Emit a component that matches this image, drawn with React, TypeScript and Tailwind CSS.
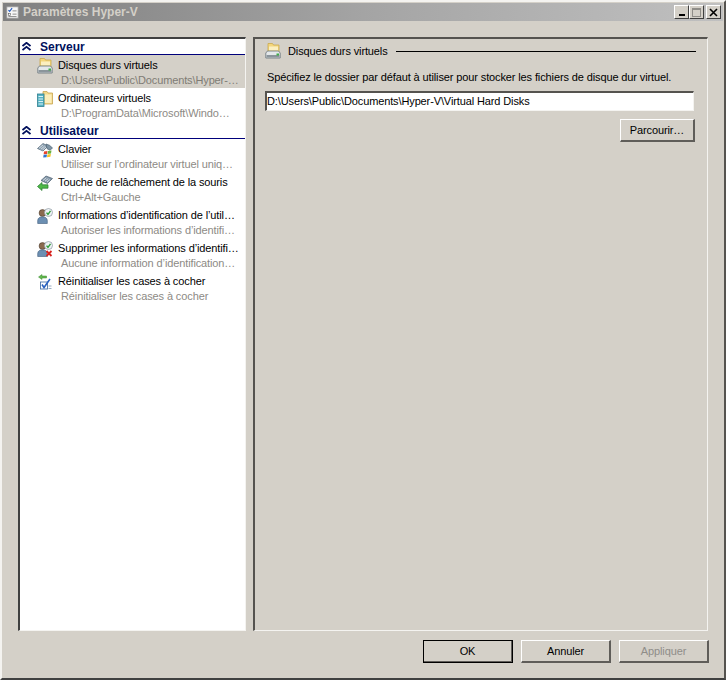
import React from 'react';

const font = 'font-["Liberation_Sans",Tahoma,sans-serif]';

function FolderDrive() {
  return (
    <svg viewBox="0 0 16 16" className="w-4 h-4">
      <path d="M3 .5h4.500l1 1.500h5.500v7H3z" fill="#f4d67c" stroke="#c9a94f" strokeWidth="0.8" />
      <path d="M4 3.500h9v4H4z" fill="#fbefc0" />
      <path d="M.8 10 2.500 8h11L15.200 10v5H.8z" fill="#e4e8ea" stroke="#667178" strokeWidth="0.8" />
      <rect x="1.500" y="12" width="13" height="2.500" fill="#8b959b" />
      <rect x="11.500" y="10.500" width="2.500" height="2" fill="#3fae49" />
    </svg>
  );
}

function ServerFolder() {
  return (
    <svg viewBox="0 0 16 16" className="w-4 h-4">
      <path d="M6 .5h4l1 1.500h4.500v11H6z" fill="#f3d98a" stroke="#c6a550" strokeWidth="0.8" />
      <rect x="8" y="3.500" width="6.500" height="8.500" fill="#fbeebb" />
      <rect x=".5" y="3" width="6.500" height="12.500" fill="#58b3c4" stroke="#2e7f91" strokeWidth="0.8" />
      <path d="M1.500 5.500h4.500M1.500 8h4.500M1.500 10.500h4.500M1.500 13h4.500" stroke="#d9f2f6" strokeWidth="1" />
    </svg>
  );
}

function Keyboard() {
  return (
    <svg viewBox="0 0 16 16" className="w-4 h-4">
      <path d="M.5 6.500 6 1.500l5 2.500-5 5z" fill="#8fa3b3" stroke="#4f6475" strokeWidth="0.7" />
      <path d="M2 6.300 6 3M3.800 7.300l3.800-3.200M5.600 8l3.600-3.200" stroke="#e3e9ee" strokeWidth="0.8" />
      <path d="M9 2l3.500 1.300L15.500 6l-2.500 2.200-3-1.500z" fill="#7e94a5" stroke="#4f6475" strokeWidth="0.7" />
      <path d="M7 9.500 10.500 9l-.5 3-3.300.3z" fill="#e8452c" />
      <path d="M11 9l3.500-.5-.5 3-3.500.4z" fill="#6cb33f" />
      <path d="M6.600 12.800 10 12.500l-.5 2.700-3.300.3z" fill="#2f74d0" />
      <path d="M10.400 12.400 13.900 12l-.5 2.800-3.400.4z" fill="#f7c325" />
    </svg>
  );
}

function MouseRelease() {
  return (
    <svg viewBox="0 0 16 16" className="w-4 h-4">
      <path d="M4 5.500 9 1l6.500 2.500-5 5z" fill="#8397a8" stroke="#4a5f70" strokeWidth="0.7" />
      <path d="M6 5.500 9.300 2.800M8 6.200l3.300-2.600M10 7l2.800-2.400" stroke="#e3e9ee" strokeWidth="0.8" />
      <path d="M.5 11.500 5 7.500v2.300h6v3.400H5v2.300z" fill="#4fb848" stroke="#23792b" strokeWidth="0.7" />
    </svg>
  );
}

function UserCheck({ denied = false }: { denied?: boolean }) {
  return (
    <svg viewBox="0 0 16 16" className="w-4 h-4">
      <circle cx="5.500" cy="5" r="3.400" fill="#8a6a4f" stroke="#4c3a2c" strokeWidth="0.6" />
      <path d="M.7 15.500v-3C.7 10 3 8.800 5.500 8.800S10.300 10 10.300 12.500v3z" fill="#6c8fb2" stroke="#3f5d7c" strokeWidth="0.6" />
      <circle cx="11.500" cy="4.500" r="4" fill="#eef2f5" stroke="#8b97a1" strokeWidth="0.7" />
      <path d="M9.500 4.600l1.500 1.700 2.500-3.400" fill="none" stroke="#2f9e3a" strokeWidth="1.400" />
      {denied && <path d="M9.500 10l5 5M14.500 10l-5 5" stroke="#d8231f" strokeWidth="1.800" />}
    </svg>
  );
}

function ResetChecks() {
  return (
    <svg viewBox="0 0 16 16" className="w-4 h-4">
      <path d="M5 .5 1.500 3 5 5.500V4h4.500V2H5z" fill="#63b84f" stroke="#3c8a33" strokeWidth="0.5" />
      <rect x="3.500" y="8" width="7" height="7" fill="#fff" stroke="#4f77a8" strokeWidth="0.9" />
      <path d="M5 10.500 7 13.500l6-8.500" fill="none" stroke="#2a62c0" strokeWidth="1.600" />
      <path d="M11.500 12h3M11.500 14.500h3" stroke="#90a4bc" strokeWidth="0.9" />
    </svg>
  );
}

function Section({ title, className = '' }: { title: string; className?: string }) {
  return (
    <div className={`flex items-center h-[16px] border-b border-[#00007b] ${className}`}>
      <svg viewBox="0 0 9 9" className="w-[9px] h-[9px] ml-[2px] mr-[9px]">
        <path d="M.5 4 4.500.8 8.500 4M.5 8 4.500 4.800 8.500 8" fill="none" stroke="#00105c" strokeWidth="1.800" />
      </svg>
      <span className="text-[12px] font-bold text-[#00105c]">{title}</span>
    </div>
  );
}

function NavItem({ icon, label, sub, selected = false }: { icon: React.ReactNode; label: string; sub: string; selected?: boolean }) {
  return (
    <div className={`h-[33px] flex ${selected ? 'bg-[#d4d0c8]' : ''}`}>
      <div className="w-[38px] pl-[17px] pt-[3px] shrink-0">{icon}</div>
      <div className="pt-[3px] leading-[15px] text-[11px] tracking-[-0.12px] whitespace-nowrap">
        <div className="text-[#000]">{label}</div>
        <div className={`pl-[3px] ${selected ? 'text-[#7f7c75]' : 'text-[#8d8a85]'}`}>{sub}</div>
      </div>
    </div>
  );
}

function DialogButton({ label, isDefault = false, disabled = false }: { label: string; isDefault?: boolean; disabled?: boolean }) {
  return (
    <button
      className={`w-[90px] h-[23px] text-[11px] tracking-[-0.12px] bg-[#d4d0c8] border-t border-l border-b-2 border-r-2 border-t-white border-l-white border-b-[#5f5d59] border-r-[#5f5d59] ${
        isDefault ? 'outline outline-1 outline-offset-[-1px] outline-black' : ''
      } ${disabled ? 'text-[#8f8d88]' : 'text-[#000]'}`}
    >
      {label}
    </button>
  );
}

export default function App() {
  return (
    <div className={`w-[726px] h-[680px] bg-[#d4d0c8] border-t-2 border-l-2 border-t-[#f4f3f0] border-l-[#f4f3f0] border-r-2 border-b-2 border-r-[#55534f] border-b-[#404040] overflow-hidden flex flex-col ${font}`}>
      {/* Title bar */}
      <div className="h-[18px] mt-px mx-px bg-gradient-to-r from-[#808080] via-[#a4a4a4] to-[#c0c0c0] flex items-center pl-[3px] pr-[2px] shrink-0">
        <svg viewBox="0 0 16 16" className="w-[13px] h-[15px] mr-[4px]">
          <rect x="1" y="1" width="14" height="14" fill="#f7f7f7" stroke="#9a9a9a" />
          <path d="M3 5l1.500 1.500L7.500 2.500" fill="none" stroke="#2c62c4" strokeWidth="1.500" />
          <rect x="3" y="9" width="2.500" height="2.500" fill="none" stroke="#555" strokeWidth="0.7" />
          <path d="M8 6h5M8 10h5M3 13h10" stroke="#777" />
        </svg>
        <span className="text-[12px] font-bold text-[#d4d0c8]">Paramètres Hyper-V</span>
        <div className="ml-auto flex">
          <div className="w-[15px] h-[14px] bg-[#d4d0c8] border-t border-l border-white border-r border-b border-r-[#404040] border-b-[#404040] flex items-end justify-center pb-[2px]">
            <div className="w-[6px] h-[2px] bg-black" />
          </div>
          <div className="w-[15px] h-[14px] bg-[#d4d0c8] border-t border-l border-white border-r border-b border-r-[#404040] border-b-[#404040] flex items-center justify-center">
            <div className="w-[9px] h-[9px] border border-t-2 border-[#8f8d88]" />
          </div>
          <div className="w-[15px] h-[14px] ml-[2px] bg-[#d4d0c8] border-t border-l border-white border-r border-b border-r-[#404040] border-b-[#404040] flex items-center justify-center">
            <svg viewBox="0 0 9 9" className="w-[9px] h-[9px]">
              <path d="M1 1l7 7M8 1 1 8" stroke="#000" strokeWidth="1.600" />
            </svg>
          </div>
        </div>
      </div>

      {/* Panes */}
      <div className="flex gap-[7px] h-[594px] mt-[16px] ml-[16px] shrink-0">
        <div className="w-[228px] bg-white border-t-2 border-l-2 border-t-[#404040] border-l-[#404040] border-r border-b border-r-[#f4f3f0] border-b-[#f4f3f0]">
          <Section title="Serveur" />
          <NavItem selected icon={<FolderDrive />} label="Disques durs virtuels" sub="D:\Users\Public\Documents\Hyper-…" />
          <NavItem icon={<ServerFolder />} label="Ordinateurs virtuels" sub="D:\ProgramData\Microsoft\Windo…" />
          <Section title="Utilisateur" className="mt-[2px]" />
          <NavItem icon={<Keyboard />} label="Clavier" sub="Utiliser sur l’ordinateur virtuel uniq…" />
          <NavItem icon={<MouseRelease />} label="Touche de relâchement de la souris" sub="Ctrl+Alt+Gauche" />
          <NavItem icon={<UserCheck />} label="Informations d’identification de l’util…" sub="Autoriser les informations d’identifi…" />
          <NavItem icon={<UserCheck denied />} label="Supprimer les informations d’identifi…" sub="Aucune information d’identification…" />
          <NavItem icon={<ResetChecks />} label="Réinitialiser les cases à cocher" sub="Réinitialiser les cases à cocher" />
        </div>

        <div className="w-[455px] bg-[#d4d0c8] border-t-2 border-l-2 border-t-[#55534f] border-l-[#55534f] border-r border-b border-r-[#f4f3f0] border-b-[#f4f3f0]">
          <div className="flex items-center pl-[10px] mt-[2px] h-[20px]">
            <FolderDrive />
            <span className="text-[11px] tracking-[-0.12px] text-[#000] ml-[7px] mr-[8px] whitespace-nowrap">Disques durs virtuels</span>
            <div className="w-[300px] h-px bg-black" />
          </div>
          <div className="ml-[12px] mt-[9px] text-[11px] tracking-[-0.12px] text-[#000] leading-[15px] whitespace-nowrap">
            Spécifiez le dossier par défaut à utiliser pour stocker les fichiers de disque dur virtuel.
          </div>
          <div className="ml-[10px] mt-[6px] w-[429px] h-[20px] bg-white border-t-2 border-l-2 border-t-[#55534f] border-l-[#55534f] border-r border-b border-r-[#f4f3f0] border-b-[#f4f3f0] text-[11px] tracking-[-0.12px] text-[#000] leading-[17px] whitespace-nowrap">
            D:\Users\Public\Documents\Hyper-V\Virtual Hard Disks
          </div>
          <div className="flex justify-end w-[440px] mt-[8px]">
            <button className="w-[75px] h-[23px] text-[11px] tracking-[-0.12px] text-[#000] bg-[#d4d0c8] border-t border-l border-b-2 border-r-2 border-t-white border-l-white border-b-[#5f5d59] border-r-[#5f5d59]">
              Parcourir…
            </button>
          </div>
        </div>
      </div>

      {/* Footer buttons */}
      <div className="flex justify-end gap-[8px] mt-[9px] mr-[15px]">
        <DialogButton label="OK" isDefault />
        <DialogButton label="Annuler" />
        <DialogButton label="Appliquer" disabled />
      </div>
    </div>
  );
}
